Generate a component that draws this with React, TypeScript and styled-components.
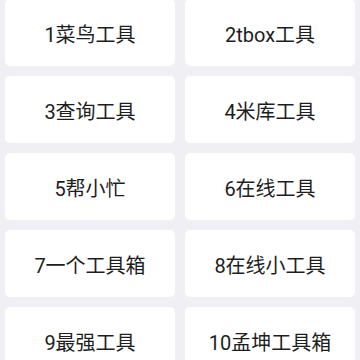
import React from "react";
import styled, { createGlobalStyle } from "styled-components";

const Global = createGlobalStyle`
  html, body { margin: 0; padding: 0; background: #efeff4; }
  body { font-family: Roboto, "Noto Sans CJK SC", sans-serif; }
`;

const Grid = styled.div`
  display: grid;
  grid-template-columns: 1fr 1fr;
  grid-auto-rows: 67px;
  gap: 10px;
  padding: 0 5px 10px;
  margin-top: -1px;
`;

const Card = styled.div`
  background: #ffffff;
  border-radius: 5px;
  display: flex;
  align-items: center;
  justify-content: center;
  padding-top: 2px;
  box-sizing: border-box;
  font-size: 20px;
  color: #1e1e1e;
`;

const items = [
  "1菜鸟工具",
  "2tbox工具",
  "3查询工具",
  "4米库工具",
  "5帮小忙",
  "6在线工具",
  "7一个工具箱",
  "8在线小工具",
  "9最强工具",
  "10孟坤工具箱",
];

export default function App() {
  return (
    <>
      <Global />
      <Grid>
        {items.map((t) => (
          <Card key={t}>{t}</Card>
        ))}
      </Grid>
    </>
  );
}
